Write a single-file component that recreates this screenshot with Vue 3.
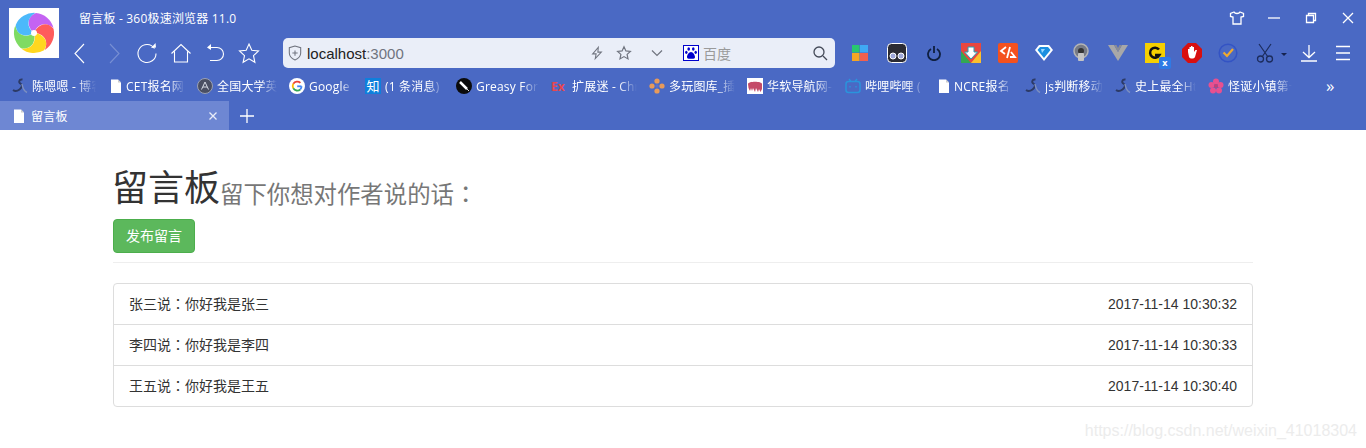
<script setup>
const messages = [
  { who: '张三说', body: '你好我是张三', time: '2017-11-14 10:30:32' },
  { who: '李四说', body: '你好我是李四', time: '2017-11-14 10:30:33' },
  { who: '王五说', body: '你好我是王五', time: '2017-11-14 10:30:40' }
]
const petals = [
  ['#c463f2', 0], ['#ff5c5c', 72], ['#ffd71f', 144], ['#7fdb62', 216], ['#4cb9fb', 288]
]
const bookmarks = [
  { kind: 'csdn', label: '陈嗯嗯 - 博客', width: 96 },
  { kind: 'doc', label: 'CET报名网', width: 89 },
  { kind: 'edu', label: '全国大学英语', width: 92 },
  { kind: 'google', label: 'Google', width: 76 },
  { kind: 'zhi', label: '(1 条消息)', width: 91 },
  { kind: 'greasy', label: 'Greasy Fork', width: 95 },
  { kind: 'ex', label: '扩展迷 - Chrome', width: 98 },
  { kind: 'duo', label: '多玩图库_插画', width: 98 },
  { kind: 'hua', label: '华软导航网-华', width: 98 },
  { kind: 'bili', label: '哔哩哔哩 (', width: 91 },
  { kind: 'doc', label: 'NCRE报名', width: 89 },
  { kind: 'csdn', label: 'js判断移动端', width: 90 },
  { kind: 'csdn', label: '史上最全Html', width: 93 },
  { kind: 'flower', label: '怪诞小镇第一', width: 96 }
]
</script>

<template>
  <div class="page">
    <header class="chrome">
      <div class="top">
        <div class="logo">
          <svg viewBox="0 0 50 50" width="50" height="50">
            <g v-for="p in petals" :key="p[1]" :transform="`rotate(${p[1]} 25 25)`">
              <path d="M25 25C18 19 17 9 27 5.100A20 20 0 0 1 44.500 20C37 13 28 16 25 25z" :fill="p[0]" />
            </g>
            <circle cx="25" cy="25" r="3" fill="#fff" />
          </svg>
        </div>
        <div class="top-main">
          <div class="titlebar">
            <span class="title">留言板 - 360极速浏览器 11.0</span>
            <div class="win">
              <svg class="win-skin" viewBox="0 0 16 16" width="16" height="16"><path d="M5 2 1.500 3.500v3l2.500.5v7h8V7l2.500-.5v-3L11 2c-1 2-5 2-6 0z" class="line" /></svg>
              <svg class="win-min" viewBox="0 0 14 14" width="14" height="14"><path d="M1 7h12" class="line" /></svg>
              <svg class="win-max" viewBox="0 0 12 12" width="12" height="12"><path d="M1.500 3.500h7v7h-7zM3.500 3.500v-2h7v7h-2" class="line" /></svg>
              <svg class="win-close" viewBox="0 0 12 12" width="12" height="12"><path d="m1 1 10 10M11 1 1 11" class="line" /></svg>
            </div>
          </div>
          <div class="toolbar">
            <div class="nav">
              <svg viewBox="0 0 24 24" width="24" height="24"><path d="M16 3 7 12.500l9 9.500" class="thin" /></svg>
              <svg class="dim" viewBox="0 0 24 24" width="24" height="24"><path d="m8 3 9 9.500L8 22" class="thin" /></svg>
              <svg viewBox="0 0 24 24" width="24" height="24"><path d="M19.500 7.500a9 9 0 1 0 1.500 5" class="thin" /><path d="m16 7 5-.5L20.500 2z" fill="#fff" /></svg>
              <svg viewBox="0 0 24 24" width="24" height="24"><path d="M2.500 12.500 12 3.500l9.500 9M5.500 10.500V21h13V10.500" class="thin" /></svg>
              <svg viewBox="0 0 24 24" width="24" height="24"><path d="M6 6.500h8a6.500 6.500 0 0 1 0 13H7" class="thin" /><path d="M8 3 4 6.500 8 9z" fill="#fff" /></svg>
              <svg viewBox="0 0 24 24" width="24" height="24"><path d="m12 3 2.800 6.300 6.700.7-5 4.600 1.400 6.700L12 17.800l-5.900 3.500 1.400-6.700-5-4.600 6.700-.7z" class="thin" /></svg>
            </div>
            <div class="address">
              <svg class="shield" viewBox="0 0 16 18" width="14" height="16"><path d="M8 1 1.500 3v6c0 4 3 6.500 6.500 8 3.500-1.500 6.500-4 6.500-8V3z" class="gray" /><path d="M8 6v6M5 9h6" class="gray" /></svg>
              <span class="url"><b>localhost</b>:3000</span>
              <div class="addr-right">
                <svg viewBox="0 0 16 16" width="14" height="16"><path d="M9.500 1.500 3 9h4l-1 5.500L13 7H9z" class="gray" /></svg>
                <svg class="addr-star" viewBox="0 0 16 16" width="16" height="16"><path d="m8 1.800 1.900 4.100 4.500.5-3.300 3 .9 4.500L8 11.600l-4 2.300.9-4.500-3.300-3 4.500-.5z" class="gray" /></svg>
                <svg class="addr-chev" viewBox="0 0 12 12" width="12" height="12"><path d="m1 3.500 5 5 5-5" class="gray" /></svg>
                <svg class="baidu" viewBox="0 0 16 16" width="16" height="16">
                  <rect x=".5" y=".5" width="15" height="15" fill="#fff" stroke="#00c" />
                  <g fill="#00c"><ellipse cx="5.700" cy="4" rx="1.300" ry="1.800" /><ellipse cx="10.300" cy="4" rx="1.300" ry="1.800" /><ellipse cx="3.300" cy="7.300" rx="1.200" ry="1.600" /><ellipse cx="12.700" cy="7.300" rx="1.200" ry="1.600" /><path d="M8 7c-2 0-4 3-4 5 0 2 2 1.700 4 1.700s4 .3 4-1.700c0-2-2-5-4-5z" /></g>
                </svg>
                <span class="engine">百度</span>
                <svg class="search" viewBox="0 0 16 16" width="16" height="16"><circle cx="7" cy="7" r="5" class="dark" /><path d="m11 11 4 4" class="dark" /></svg>
              </div>
            </div>
            <div class="exts">
              <svg viewBox="0 0 18 18" width="18" height="18"><rect x="1" y="1" width="7.500" height="7.500" fill="#28c76f" /><rect x="9" y="1" width="8" height="7.500" fill="#3fa9f5" /><rect x="1" y="9" width="7.500" height="8" fill="#f5a623" /><rect x="9" y="9" width="8" height="8" fill="#f2604f" /></svg>
              <svg viewBox="0 0 20 20" width="20" height="20"><rect x=".5" y=".5" width="19" height="19" rx="4" fill="#2b2b33" stroke="#fff" /><circle cx="6" cy="13" r="3" fill="#9fa8da" stroke="#fff" /><circle cx="14" cy="13" r="3" fill="#9fa8da" stroke="#fff" /></svg>
              <svg viewBox="0 0 16 16" width="16" height="16"><path d="M5 4a6 6 0 1 0 6 0M8 1v7" fill="none" stroke="#0f1f40" stroke-width="1.800" /></svg>
              <svg viewBox="0 0 20 20" width="20" height="20"><rect width="20" height="20" fill="#e8473f" /><path d="M0 20V8l10 12z" fill="#34a853" /><path d="M20 20V8L10 20z" fill="#fbc02d" /><path d="M7 4h6v5h3.500L10 16 3.500 9H7z" fill="#fff" stroke="#2f9db0" /></svg>
              <svg viewBox="0 0 20 20" width="20" height="20"><rect width="20" height="20" rx="2" fill="#f4511e" /><path d="M8 4 3 8l4 3M12 4 9 15M13 9l4 5h-5" fill="none" stroke="#fff" stroke-width="1.800" /></svg>
              <svg viewBox="0 0 20 20" width="20" height="20"><path d="M5 2h10l4 5-9 11L1 7z" fill="#fff" /><path d="M6 4h8l2.500 3L10 15 3.500 7z" fill="#1b8fe0" /><path d="M7 6h4L8 10z" fill="#9ad8ff" /></svg>
              <svg viewBox="0 0 20 20" width="20" height="20"><circle cx="10" cy="8" r="7" fill="#767a85" stroke="#b4b4b4" stroke-width="1.500" /><circle cx="10" cy="8" r="3" fill="#333" /><rect x="7" y="10" width="6" height="8" rx="1" fill="#c4c4c4" /></svg>
              <svg viewBox="0 0 20 18" width="20" height="18"><path d="M0 1h6l4 7 4-7h6L10 17z" fill="#a8a8a8" /><path d="M6 1h2.500L10 4l1.500-3H14l-4 7z" fill="#8a8d97" /></svg>
              <div class="gx">
                <svg viewBox="0 0 20 20" width="20" height="20"><rect width="20" height="20" fill="#f6d000" /><path d="M14 6.500A5 5 0 1 0 14.500 12H10" fill="none" stroke="#111" stroke-width="2.500" /></svg>
                <span class="gx-badge">x</span>
              </div>
              <svg viewBox="0 0 20 20" width="20" height="20"><path d="M6 0h8l6 6v8l-6 6H6l-6-6V6z" fill="#d80f0f" /><path d="M6 9V6h1.500v3-5H9v4-5h1.500v5-4H12v5l1.500-2H15l-2 7c-1 2-5 2-6 0z" fill="#fff" /></svg>
              <svg viewBox="0 0 20 20" width="20" height="20"><circle cx="10" cy="10" r="8.800" fill="none" stroke="#3353c4" stroke-width="1.500" /><path d="m5.500 9.500 3.500 3.500 6-7" fill="none" stroke="#f0aa2d" stroke-width="2.200" /></svg>
              <svg viewBox="0 0 18 20" width="18" height="20"><path d="M3 1l9 13M15 1 6 14" fill="none" stroke="#1c2c5c" stroke-width="1.200" /><circle cx="4.500" cy="16" r="3" fill="none" stroke="#1c2c5c" stroke-width="1.300" /><circle cx="13.500" cy="16" r="3" fill="none" stroke="#1c2c5c" stroke-width="1.300" /></svg>
              <span class="caret"></span>
              <svg viewBox="0 0 18 18" width="18" height="18"><path d="M9 1v12M3 8l6 5.500L15 8M1 17h16" class="line" /></svg>
              <svg viewBox="0 0 16 16" width="16" height="16"><path d="M1 1.500h14M1 8h14M1 14.500h14" class="line" /></svg>
            </div>
          </div>
        </div>
      </div>

      <nav class="bookmarks">
        <div v-for="(b, i) in bookmarks" :key="i" class="bm" :style="{ width: b.width + 'px' }">
          <svg v-if="b.kind === 'csdn'" viewBox="0 0 16 16" width="16" height="16"><path d="M10.500 1.500C7 1 6 4.500 9 6c2 1 .5 4-1.500 5.500C5.500 13 3 13.500 1 12" fill="none" stroke="#2c3a66" stroke-width="1.900" /><path d="M10 6c.5 3 2 7 5 8.500" fill="none" stroke="#7d8fc0" stroke-width="1.500" /></svg>
          <svg v-else-if="b.kind === 'doc'" class="doc" viewBox="0 0 12 16" width="12" height="16"><path d="M1 1.500h7l3 3V15H1z" fill="#fff" /><path d="M8 1.500v3h3" fill="#ccc" /></svg>
          <svg v-else-if="b.kind === 'edu'" viewBox="0 0 16 16" width="16" height="16"><circle cx="8" cy="8" r="7.500" fill="#4a4f63" stroke="#9aa0b4" /><path d="M4.500 11.500 8 4l3.500 7.500M6 9h4" fill="none" stroke="#d8dce6" /></svg>
          <svg v-else-if="b.kind === 'google'" viewBox="0 0 16 16" width="16" height="16"><circle cx="8" cy="8" r="8" fill="#fff" /><path d="M12.500 8.300H8.200" fill="none" stroke="#4285f4" stroke-width="1.800" /><path d="M11.400 4.800A4.700 4.700 0 0 0 4.300 5.700" fill="none" stroke="#ea4335" stroke-width="1.800" /><path d="M4.300 5.700a4.700 4.700 0 0 0 0 4.600" fill="none" stroke="#fbbc05" stroke-width="1.800" /><path d="M4.300 10.300a4.700 4.700 0 0 0 7 1.200" fill="none" stroke="#34a853" stroke-width="1.800" /><path d="M11.300 11.500a4.700 4.700 0 0 0 1.200-3.200" fill="none" stroke="#4285f4" stroke-width="1.800" /></svg>
          <span v-else-if="b.kind === 'zhi'" class="zhi">知</span>
          <svg v-else-if="b.kind === 'greasy'" viewBox="0 0 16 16" width="16" height="16"><circle cx="8" cy="8" r="8" fill="#0b0b0b" /><path d="m4 4 7 7" stroke="#fff" stroke-width="2.500" /><path d="m11 11 2 2" stroke="#ddd" /></svg>
          <span v-else-if="b.kind === 'ex'" class="ex">Ex</span>
          <svg v-else-if="b.kind === 'duo'" viewBox="0 0 16 16" width="16" height="16"><g fill="#e89a5a"><circle cx="8" cy="3" r="2.600" /><circle cx="3" cy="8" r="2.600" /><circle cx="13" cy="8" r="2.600" /><circle cx="8" cy="13" r="2.600" /></g><circle cx="8" cy="8" r="1.800" fill="#5d72c8" /></svg>
          <svg v-else-if="b.kind === 'hua'" viewBox="0 0 16 16" width="16" height="16"><rect width="16" height="16" fill="#fff" /><path d="M1 6c0-3 14-3 14 0v5l-1.500 3-1.500-3-1 3-2-4-1 4-2-4-1 3-1-3-1 3-1.500-3z" fill="#c44b68" /></svg>
          <svg v-else-if="b.kind === 'bili'" viewBox="0 0 16 16" width="16" height="16"><rect x="1" y="3.500" width="14" height="11" rx="2.500" fill="none" stroke="#2a94dc" stroke-width="1.500" /><path d="m4 1 2 2.500M12 1l-2 2.500M5 8v1.500M11 8v1.500" stroke="#2a94dc" stroke-width="1.400" /></svg>
          <svg v-else viewBox="0 0 16 16" width="16" height="16"><g fill="#e8508f"><circle cx="8" cy="3.500" r="3" /><circle cx="3.500" cy="7" r="3" /><circle cx="12.500" cy="7" r="3" /><circle cx="5" cy="12.500" r="3" /><circle cx="11" cy="12.500" r="3" /></g><circle cx="8" cy="8" r="2" fill="#c23f78" /></svg>
          <span class="bm-text">{{ b.label }}</span>
        </div>
        <span class="more">»</span>
      </nav>

      <div class="tabs">
        <div class="tab">
          <svg viewBox="0 0 12 16" width="12" height="16"><path d="M1 1.500h7l3 3V15H1z" fill="#fff" /><path d="M8 1.500v3h3" fill="#ccc" /></svg>
          <span class="tab-title">留言板</span>
          <svg class="tab-x" viewBox="0 0 8 8" width="8" height="8"><path d="m.5.5 7 7M7.500.500l-7 7" class="line" /></svg>
        </div>
        <svg class="plus" viewBox="0 0 14 14" width="14" height="14"><path d="M7 0v14M0 7h14" class="line" /></svg>
      </div>
    </header>

    <main class="container">
      <div class="page-header">
        <h1>留言板<small>留下你想对作者说的话<span class="cn-punct">：</span></small></h1>
        <button class="btn" type="button"><span class="nudge">发布留言</span></button>
      </div>
      <ul class="list">
        <li v-for="m in messages" :key="m.who" class="item">
          <span class="nudge">{{ m.who }}<span class="cn-punct">：</span>{{ m.body }}</span>
          <span class="stamp">{{ m.time }}</span>
        </li>
      </ul>
    </main>
    <span class="watermark">https://blog.csdn.net/weixin_41018304</span>
  </div>
</template>

<style>
body { margin: 0; overflow: hidden; background: #fff; }
</style>

<style scoped>
.page {
  position: relative;
  height: 448px;
  overflow: hidden;
  font-family: "Liberation Sans", "Noto Sans CJK SC", sans-serif;
  color: #333;
}
.line { fill: none; stroke: #fff; stroke-width: 1.300; }
.thin { fill: none; stroke: #fff; stroke-width: 1.100; }
.gray { fill: none; stroke: #70747f; stroke-width: 1.200; }
.dark { fill: none; stroke: #444a58; stroke-width: 1.300; }
.chrome { height: 130px; background: #4a69c4; overflow: hidden; font-family: "Open Sans", "Noto Sans CJK SC", sans-serif; }
.top { display: flex; height: 73px; }
.logo { width: 50px; height: 50px; margin: 8px 4px 0 9px; background: #fff; flex: none; }
.top-main { flex: 1; min-width: 0; }
.titlebar { display: flex; align-items: center; justify-content: space-between; height: 36px; padding-left: 16px; }
.title { font-size: 12px; color: #fff; letter-spacing: .2px; }
.win { display: flex; align-items: center; height: 36px; }
.win-skin { margin-right: 22px; }
.win-min { margin-right: 24px; }
.win-max { margin-right: 25px; }
.win-close { margin-right: 12px; }
.toolbar { display: flex; align-items: center; height: 34px; }
.nav { display: flex; align-items: center; width: 220px; flex: none; }
.nav svg { width: 24px; margin: 0 4.900px; flex: none; }
.dim { opacity: .25; }
.address {
  display: flex; align-items: center; flex: none;
  width: 552px; height: 30px; box-sizing: border-box;
  padding: 0 7px 0 5px; background: #eaeef8; border-radius: 5px;
}
.shield { flex: none; }
.url { margin-left: 5px; font: 15px "Liberation Sans", sans-serif; color: #70747f; }
.url b { font-weight: 400; color: #222; }
.addr-right { margin-left: auto; display: flex; align-items: center; }
.addr-star { margin-left: 12px; }
.addr-chev { margin-left: 19px; }
.baidu { margin-left: 20px; }
.engine { margin-left: 4px; width: 109px; font-size: 14px; color: #9a9a9a; }
.exts {
  display: grid; flex: 1; padding-left: 7px;
  grid-template-columns: repeat(12, 36.800px) 0 50.800px 17.200px;
  justify-items: center; align-items: center;
}
.gx { position: relative; height: 20px; width: 20px; }
.gx svg { display: block; }
.gx-badge {
  position: absolute; right: -6px; bottom: -6px; width: 12px; height: 12px;
  background: #2f7ae5; border-radius: 2px; color: #fff; font-size: 9px; font-weight: 700;
  text-align: center; line-height: 12px;
}
.caret {
  width: 0; height: 0; margin-top: 2px;
  border: 3px solid transparent; border-top: 3px solid #15234f; border-bottom: 0;
}
.bookmarks { display: flex; align-items: center; height: 26px; padding-left: 12px; position: relative; }
.bm { display: flex; align-items: center; flex: none; min-width: 0; overflow: hidden; }
.bm svg, .zhi, .ex { flex: none; }
.doc { margin-left: 2px; }
.bm-text {
  flex: 1; min-width: 0; margin-left: 4px; margin-right: 12px; white-space: nowrap; overflow: hidden;
  font-size: 12px; color: #fff; letter-spacing: .2px;
  -webkit-mask-image: linear-gradient(to right, #000 72%, transparent);
  mask-image: linear-gradient(to right, #000 72%, transparent);
}
.zhi {
  width: 16px; height: 16px; background: #0f7fdc; color: #fff;
  font-size: 13px; line-height: 16px; text-align: center;
}
.ex { width: 17px; font-size: 12px; font-weight: 700; color: #e8474f; }
.more { position: absolute; left: 1326px; top: 1px; font-size: 17px; line-height: 24px; color: #fff; }
.tabs { display: flex; align-items: center; height: 29px; margin-top: 2px; }
.tab {
  display: flex; align-items: center; width: 229px; height: 29px; box-sizing: border-box;
  padding: 0 12px 0 13px; background: #6e87d3;
}
.tab-title { flex: 1; margin-left: 6px; font-size: 12px; color: #fff; letter-spacing: .2px; }
.tab-x { opacity: .85; }
.plus { margin-left: 11px; }
.container { width: 1140px; margin: 0 auto; }
.page-header { padding-bottom: 9px; border-bottom: 1px solid #eee; margin-bottom: 20px; }
h1 { margin: 0 0 0 -1px; padding-top: 39px; font-size: 36px; font-weight: 400; line-height: 1.1; color: #333; height: 50px; box-sizing: content-box; white-space: nowrap; }
h1 small { position: relative; top: 2px; font-size: 23.400px; color: #777; font-weight: 400; }
.cn-punct { font-family: "Noto Sans CJK TC", sans-serif; }
.btn {
  display: block; width: 82px; height: 34px; padding: 0 0 2px; border: 1px solid #4cae4c; border-radius: 4px;
  background: #5cb85c; color: #fff; font: 14px "Liberation Sans", "Noto Sans CJK SC", sans-serif;
}
.list { list-style: none; margin: 0; padding: 0; border: 1px solid #ddd; border-radius: 4px; }
.item {
  display: flex; justify-content: space-between; align-items: center; height: 40px;
  padding: 0 15px; font-size: 14px; color: #333;
}
.item .nudge { margin-top: -2px; }
.item + .item { border-top: 1px solid #ddd; }
.watermark {
  position: absolute; right: 9px; top: 421px; font-size: 16px; line-height: 20px; color: #ececec;
}
</style>
